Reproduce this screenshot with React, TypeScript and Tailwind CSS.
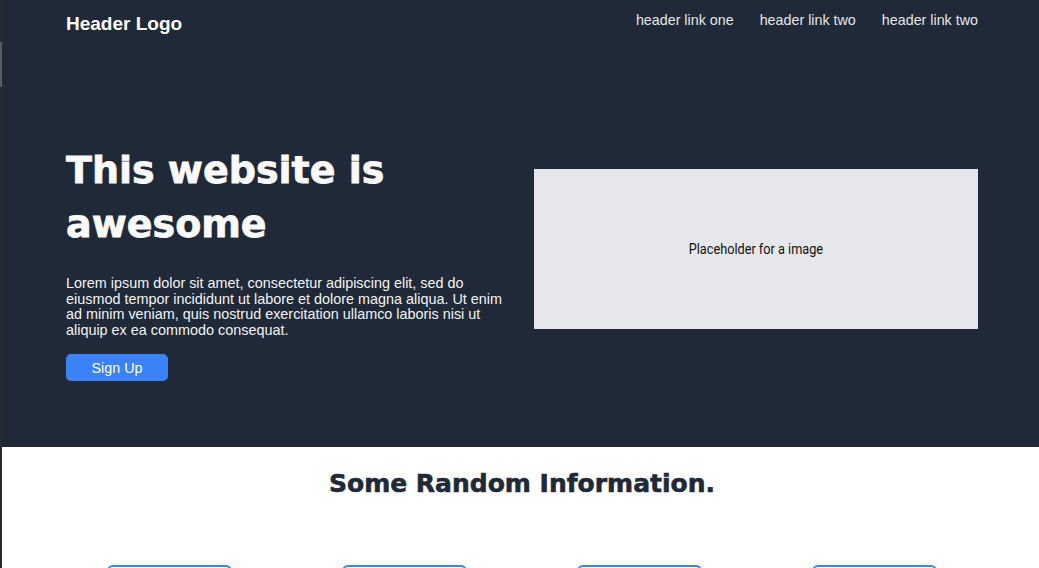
import React from "react";

const sans = "font-['Liberation_Sans',Arial,sans-serif]";
const heavy = "font-['DejaVu_Sans',Verdana,sans-serif]";

export default function App() {
  return (
    <div className={`flex min-h-screen w-full ${sans}`}>
      <div className="w-[2px] shrink-0 bg-[#2b2b2b] flex flex-col">
        <div className="mt-[42px] h-[45px] bg-[#5c5c5c]" />
      </div>
      <div className="flex-1 flex flex-col">
        <section className="bg-[#1f2937]">
          <div className="ml-[64px] w-[912px]">
            <header className="pt-[10px] flex items-start justify-between">
              <div className="text-[19px] leading-[28px] font-bold text-white">Header Logo</div>
              <nav className="flex gap-[26px] text-[14.3px] leading-[20px] text-[#e5e7eb]">
                <a>header link one</a>
                <a>header link two</a>
                <a>header link two</a>
              </nav>
            </header>
            <div className="mt-[105px] pb-[66px] grid grid-cols-2 gap-6 items-start">
              <div className="flex flex-col items-start">
                <h1 className={`${heavy} text-[38px] leading-[54px] font-bold text-[#fafafa] [-webkit-text-stroke:0.8px_#fafafa]`}>
                  This website is awesome
                </h1>
                <p className="mt-[25px] text-[14.4px] leading-[15.6px] text-[#f3f4f6]">
                  Lorem ipsum dolor sit amet, consectetur adipiscing elit, sed do eiusmod tempor incididunt ut labore et dolore magna aliqua. Ut enim ad minim veniam, quis nostrud exercitation ullamco laboris nisi ut aliquip ex ea commodo consequat.
                </p>
                <button className="mt-[16px] w-[102px] h-[27px] rounded-[5px] bg-[#3b82f6] text-white text-[14.3px] leading-none flex items-center justify-center">
                  Sign Up
                </button>
              </div>
              <div className="mt-[26px] h-[160px] bg-[#e5e7eb] flex items-center justify-center">
                <span className="inline-block mt-[2px] scale-x-[0.82] font-['Roboto',sans-serif] text-[15.5px] leading-none text-[#111]">
                  Placeholder for a image
                </span>
              </div>
            </div>
          </div>
        </section>
        <section className="bg-white flex-1">
          <div className="ml-[64px] w-[912px] pt-[21px]">
            <h2 className={`${heavy} text-center text-[25px] leading-[32px] font-bold text-[#1f2937] [-webkit-text-stroke:0.6px_#1f2937]`}>
              Some Random Information.
            </h2>
            <div className="mt-[65px] grid grid-cols-4 gap-7">
              {[0, 1, 2, 3].map((i) => (
                <div key={i} className="justify-self-center w-[125px] h-[120px] border-2 border-[#3b82f6] rounded-md" />
              ))}
            </div>
          </div>
        </section>
      </div>
    </div>
  );
}
